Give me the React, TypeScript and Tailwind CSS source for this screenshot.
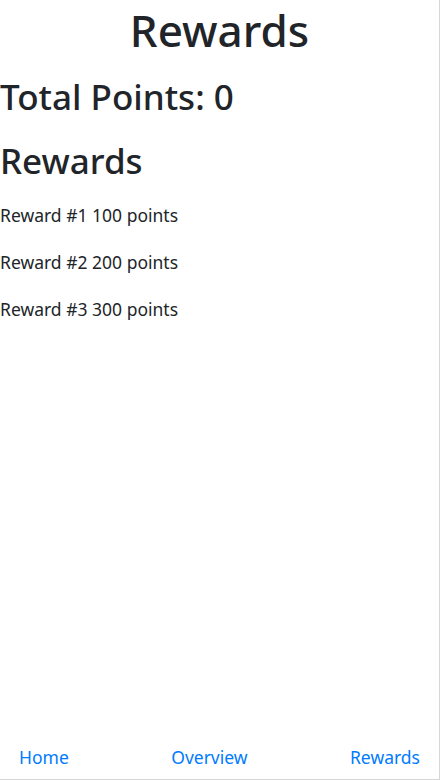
const rewards = [
  { id: 1, points: 100 },
  { id: 2, points: 200 },
  { id: 3, points: 300 },
];

export default function App() {
  return (
    <div
      className="flex h-[780px] w-[440px] flex-col border-b border-r border-[#d6d6d6] bg-white text-[#212529]"
      style={{ fontFamily: '"Noto Sans", "Open Sans", sans-serif' }}
    >
      <h1 className="mt-[4px] text-center text-[44px] font-medium leading-[52px]">Rewards</h1>
      <h2 className="mt-[20px] text-[35px] font-medium leading-[42px]">Total Points: 0</h2>
      <h2 className="mt-[22px] text-[35px] font-medium leading-[42px]">Rewards</h2>
      <ul className="mt-[20px] flex flex-col gap-[21px] text-[17.5px] leading-[26px]">
        {rewards.map((reward) => (
          <li key={reward.id}>
            Reward #{reward.id} {reward.points} points
          </li>
        ))}
      </ul>
      <nav className="mt-auto mb-[9px] flex justify-between px-[19px] text-[17.5px] leading-[26px] text-[#007bff]">
        <a href="#">Home</a>
        <a href="#">Overview</a>
        <a href="#">Rewards</a>
      </nav>
    </div>
  );
}
